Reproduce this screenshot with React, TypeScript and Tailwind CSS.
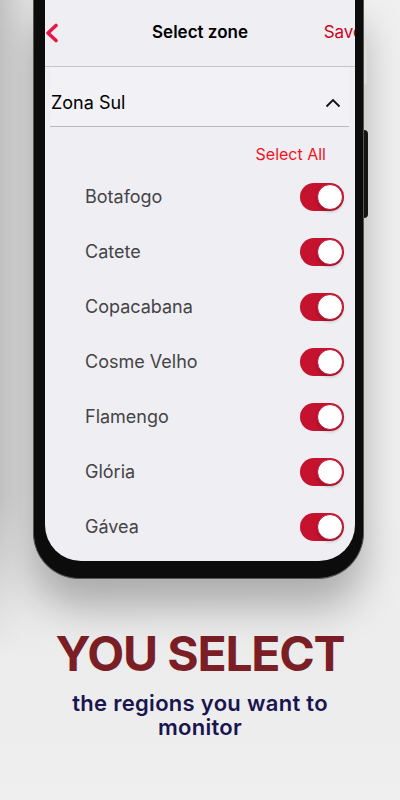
import { useState } from "react";

const zones = [
  "Botafogo",
  "Catete",
  "Copacabana",
  "Cosme Velho",
  "Flamengo",
  "Glória",
  "Gávea",
];

const Toggle = ({ on, onClick }: { on: boolean; onClick: () => void }) => (
  <button
    type="button"
    onClick={onClick}
    className={`flex h-[28px] w-[44px] items-center rounded-full p-[1px] ${
      on ? "justify-end bg-[#c4122f]" : "justify-start bg-[#d8d8dc]"
    }`}
  >
    <span className="h-[26px] w-[26px] rounded-full border border-[#c4122f] bg-white shadow-[0_2px_3px_rgba(0,0,0,0.2)]" />
  </button>
);

export default function App() {
  const [checked, setChecked] = useState<boolean[]>(zones.map(() => true));

  return (
    <div
      className="h-[800px] w-[400px] overflow-hidden bg-[linear-gradient(180deg,rgba(238,238,238,0)_0%,rgba(238,238,238,0)_62%,#ececec_82%,#efefef_100%),linear-gradient(90deg,#c3c3c3_0%,#dcdcdc_6%,#e9e9e9_14%,#efefef_40%,#f0f0f0_100%)]"
      style={{ fontFamily: "Inter, 'Noto Sans', sans-serif" }}
    >
      {/* phone */}
      <div className="relative ml-[33px] w-[331px] rounded-b-[46px] border-x border-b border-[#555] bg-[#0c0c0c] pb-[17px] pl-[11px] pr-[8px] shadow-[0_28px_40px_rgba(0,0,0,0.28)]">
        <div className="absolute right-[-4px] top-[40px] h-[44px] w-[3px] rounded-r bg-[#dcdcdc]" />
        <div className="absolute right-[-5px] top-[130px] h-[88px] w-[4px] rounded-r bg-[#151515]" />

        <div className="h-[561px] overflow-hidden rounded-b-[36px] bg-[#efeef3]">
          {/* header */}
          <div className="grid h-[67px] grid-cols-[1fr_auto_1fr] items-center border-b border-[#c6c6c9] pb-[3px] pt-[2px]">
            <div className="flex items-center">
              <svg width="14" height="20" viewBox="0 0 14 20">
                <path
                  d="M11 2.5 L3 10 L11 17.5"
                  fill="none"
                  stroke="#e8174a"
                  strokeWidth="3.6"
                  strokeLinecap="round"
                  strokeLinejoin="round"
                />
              </svg>
            </div>
            <div className="text-[17px] font-semibold text-black">Select zone</div>
            <div className="mr-[-8px] flex justify-end text-[17px] text-[#d0021b]">Save</div>
          </div>

          {/* zone */}
          <div className="ml-[5px] mr-[6px] flex items-center justify-between border-b border-[#b9b9bc] bg-[#f2f1f6] pb-[12px] pl-[1px] pr-[8px] pt-[25px]">
            <span className="text-[18px] leading-[22px] text-black">Zona Sul</span>
            <svg width="16" height="10" viewBox="0 0 16 10">
              <path d="M1.5 8.5 L8 2 L14.5 8.5" fill="none" stroke="#111" strokeWidth="1.8" />
            </svg>
          </div>

          <div className="mt-[17px] flex justify-end pr-[29px]">
            <button
              type="button"
              onClick={() => setChecked(zones.map(() => true))}
              className="text-[16px] leading-[20px] text-[#f0141e]"
            >
              Select All
            </button>
          </div>

          <div className="mt-[5px] flex flex-col">
            {zones.map((z, i) => (
              <div key={z} className="flex h-[55px] items-center justify-between pl-[40px] pr-[11px]">
                <span className="text-[18px] text-[#444446]">{z}</span>
                <Toggle
                  on={checked[i]}
                  onClick={() =>
                    setChecked((c) => c.map((v, j) => (j === i ? !v : v)))
                  }
                />
              </div>
            ))}
          </div>
        </div>
      </div>

      {/* caption */}
      <div className="mt-[47px] flex flex-col items-center text-center">
        <h1 className="text-[48px] font-bold leading-[56px] tracking-[-1.2px] text-[#7b1e25]">
          YOU SELECT
        </h1>
        <p className="mt-[9px] w-[290px] text-[22px] font-semibold leading-[24px] tracking-[0.3px] text-[#1a1550]">
          the regions you want to monitor
        </p>
      </div>
    </div>
  );
}
